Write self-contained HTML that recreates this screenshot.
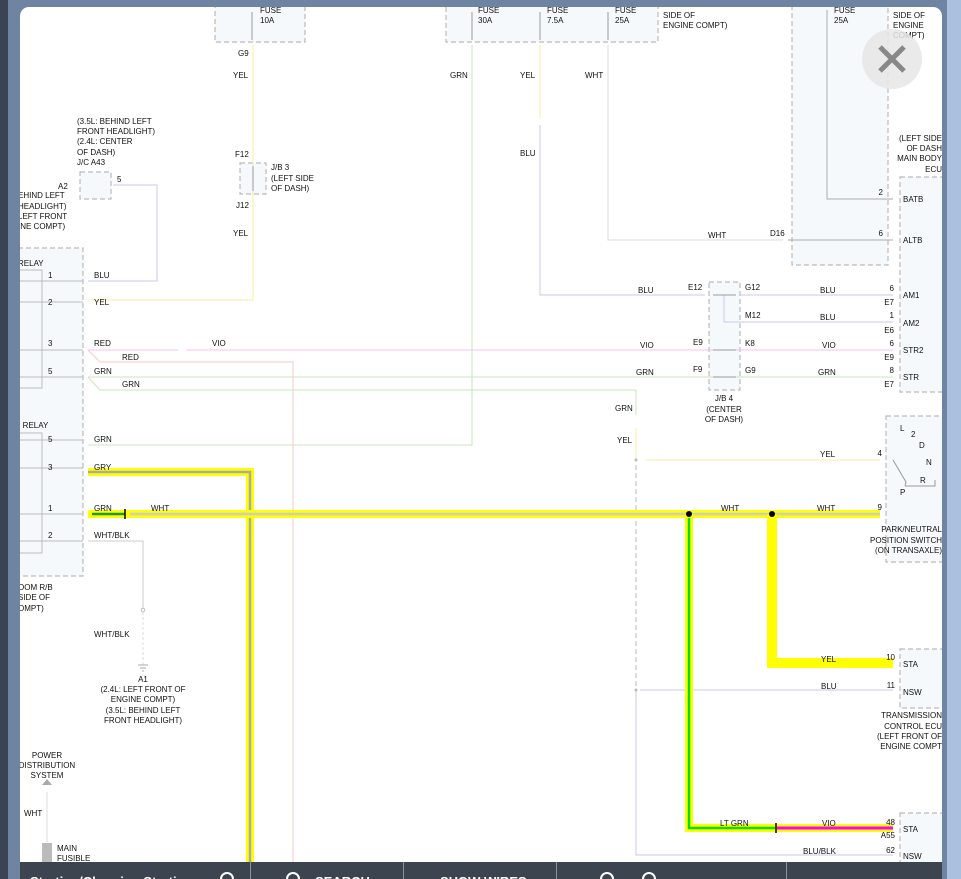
<!DOCTYPE html>
<html><head><meta charset="utf-8"><style>
html,body{margin:0;padding:0;width:961px;height:879px;overflow:hidden;background:#6e84a2;}
#panel{position:absolute;left:20px;top:7px;width:922px;height:872px;background:#fff;border-radius:9px 9px 0 0;overflow:hidden;}
#lstrip{position:absolute;left:0;top:0;width:8px;height:879px;background:#3a4454;}
#rstrip{position:absolute;left:947px;top:0;width:14px;height:879px;background:#a9c1df;}
svg{position:absolute;left:0;top:0;}
text{font-family:"Liberation Sans",sans-serif;font-size:8px;fill:#111;}
#tb{position:absolute;left:20px;top:862px;width:922px;height:17px;background:#3c4450;overflow:hidden;}
.tbt{position:absolute;top:12px;color:#fff;font:bold 13px "Liberation Sans",sans-serif;white-space:nowrap;}
.sep{position:absolute;top:0;width:1px;height:17px;background:#8a909a;}
.ic{position:absolute;top:10px;width:14px;height:14px;border:2px solid #fff;border-radius:50%;box-sizing:border-box;}
</style></head><body>
<div id="lstrip"></div><div id="rstrip"></div>
<div id="panel"></div>
<svg width="961" height="879" viewBox="0 0 961 879">
<defs><clipPath id="c"><rect x="20" y="7" width="922" height="855"/></clipPath></defs>
<g clip-path="url(#c)">
<g fill="#f6f9fc" stroke="#bbb" stroke-dasharray="5,3" stroke-width="1.2">
<rect x="215" y="0" width="90" height="42"/>
<rect x="446" y="0" width="212" height="42"/>
<rect x="792" y="0" width="96" height="265"/>
<rect x="900" y="177" width="50" height="215"/>
<rect x="709" y="282" width="31" height="108"/>
<rect x="240" y="163" width="26" height="31"/>
<rect x="80" y="172" width="31" height="27"/>
<rect x="10" y="248" width="73" height="328"/>
<rect x="886" y="416" width="60" height="146"/>
<rect x="900" y="649" width="50" height="59"/>
<rect x="900" y="813" width="50" height="60"/>
</g>
<g fill="none" stroke="#bbb" stroke-width="1">
<rect x="10" y="270" width="32" height="118"/>
<rect x="10" y="433" width="32" height="120"/>
</g>
<g fill="none" stroke-width="1">
<path d="M253 45V300H88" stroke="#f3f0a0"/>
<path d="M472 45V445H88" stroke="#c8e6c0"/>
<path d="M540 45V118" stroke="#f3f0a0"/>
<path d="M540 125V295H705" stroke="#c9c8f0"/>
<path d="M608 45V240H783" stroke="#ddd"/>
<path d="M740 295H893M724 295V322H745M745 322H893" stroke="#c9c8f0"/>
<path d="M113 185H157V281H88" stroke="#c9c8f0"/>
<path d="M88 350H178M186 350H893" stroke="#f4c0f0"/>
<path d="M88 350L100 362H293V862" stroke="#f7c8c8"/>
<path d="M88 377H893M88 377L100 390H636V415" stroke="#c8e6c0"/>
<path d="M636 428V460M645 460H880" stroke="#f3f0a0"/>
<path d="M636 465V690" stroke="#bbb" stroke-dasharray="5,3"/>
<path d="M640 690H893M636 690V855H893" stroke="#c9c8f0"/>
<path d="M88 541H143V608" stroke="#ccc"/>
<path d="M143 612V665" stroke="#ddd" stroke-dasharray="3,2"/>
<path d="M47 792V842" stroke="#ddd"/>
<path d="M827 10V199H893M788 240H893" stroke="#aaa"/>
<path d="M252 12V40M472 12V40M540 12V40M608 12V40M253 166V191M713 295H736M713 350H736M713 377H736" stroke="#999"/>
<path d="M20 281H83M20 302H83M20 350H83M20 377H83M20 440H83M20 468H83M20 514H83M20 541H83" stroke="#bbb"/>
<path d="M893 460L906 482L905 486M905 486H935V480" stroke="#999"/>
</g>
<g fill="none" stroke-linejoin="miter">
<path d="M88 472H250V862" stroke="#ffff00" stroke-width="8"/>
<path d="M88 472H250V862" stroke="#aaa" stroke-width="2.5"/>
<path d="M88 514H880" stroke="#ffff00" stroke-width="8"/>
<path d="M130 514H880" stroke="#ccc" stroke-width="2.5"/>
<path d="M92 514H125" stroke="#1a9a1a" stroke-width="2.5"/>
<path d="M689 514V828H893" stroke="#ffff00" stroke-width="8"/>
<path d="M689 518V828H775" stroke="#00e000" stroke-width="2.5"/>
<path d="M777 828H893" stroke="#ff00ff" stroke-width="3"/>
<path d="M772 514V663H893" stroke="#ffff00" stroke-width="10"/>
</g>
<circle cx="689" cy="514" r="3" fill="#000"/><circle cx="772" cy="514" r="3" fill="#000"/>
<path d="M125 509V519M776 823V833" stroke="#000" stroke-width="1.5"/>
<circle cx="636" cy="460" r="1.5" fill="#bbb"/><circle cx="143" cy="610" r="1.8" fill="none" stroke="#bbb"/>
<circle cx="636" cy="690" r="1.5" fill="#bbb"/>
<path d="M42 785L47 779L52 785Z" fill="#aaa"/>
<rect x="42" y="843" width="10" height="20" fill="#bbb"/>
<path d="M138 665H148M140 668H146M142 671H144" stroke="#aaa"/>
<text x="260" y="13">FUSE</text><text x="260" y="23">10A</text>
<text x="478" y="13">FUSE</text><text x="478" y="23">30A</text>
<text x="547" y="13">FUSE</text><text x="547" y="23">7.5A</text>
<text x="615" y="13">FUSE</text><text x="615" y="23">25A</text>
<text x="834" y="13">FUSE</text><text x="834" y="23">25A</text>
<text x="663" y="18">SIDE OF</text><text x="663" y="28">ENGINE COMPT)</text>
<text x="893" y="18">SIDE OF</text><text x="893" y="28">ENGINE</text><text x="893" y="38">COMPT)</text>
<text x="238" y="56">G9</text><text x="233" y="78">YEL</text>
<text x="450" y="78">GRN</text><text x="520" y="78">YEL</text><text x="585" y="78">WHT</text>
<text x="520" y="156">BLU</text>
<text x="235" y="157">F12</text><text x="236" y="208">J12</text><text x="233" y="236">YEL</text>
<text x="271" y="170">J/B 3</text><text x="271" y="181">(LEFT SIDE</text><text x="271" y="191">OF DASH)</text>
<text x="77" y="124">(3.5L: BEHIND LEFT</text><text x="77" y="134">FRONT HEADLIGHT)</text><text x="77" y="144">(2.4L: CENTER</text><text x="77" y="155">OF DASH)</text><text x="77" y="165">J/C A43</text>
<text x="58" y="189">A2</text><text x="117" y="182">5</text>
<text x="18" y="198">EHIND LEFT</text><text x="18" y="209">HEADLIGHT)</text><text x="18" y="219">LEFT FRONT</text><text x="18" y="229">INE COMPT)</text>
<text x="18" y="266">RELAY</text><text x="16" y="428">2 RELAY</text>
<text x="48" y="278">1</text><text x="48" y="305">2</text><text x="48" y="346">3</text><text x="48" y="374">5</text>
<text x="48" y="442">5</text><text x="48" y="470">3</text><text x="48" y="511">1</text><text x="48" y="538">2</text>
<text x="94" y="278">BLU</text><text x="94" y="305">YEL</text><text x="94" y="346">RED</text><text x="122" y="360">RED</text>
<text x="212" y="346">VIO</text><text x="94" y="374">GRN</text><text x="122" y="387">GRN</text>
<text x="94" y="442">GRN</text><text x="94" y="470">GRY</text><text x="94" y="511">GRN</text><text x="151" y="511">WHT</text>
<text x="94" y="538">WHT/BLK</text>
<text x="18" y="590">OOM R/B</text><text x="18" y="600">SIDE OF</text><text x="18" y="611">OMPT)</text>
<text x="94" y="637">WHT/BLK</text>
<g text-anchor="middle"><text x="143" y="682">A1</text><text x="143" y="692">(2.4L: LEFT FRONT OF</text><text x="143" y="702">ENGINE COMPT)</text><text x="143" y="713">(3.5L: BEHIND LEFT</text><text x="143" y="723">FRONT HEADLIGHT)</text>
<text x="47" y="758">POWER</text><text x="47" y="768">DISTRIBUTION</text><text x="47" y="778">SYSTEM</text>
<text x="724" y="401">J/B 4</text><text x="724" y="412">(CENTER</text><text x="724" y="422">OF DASH)</text></g>
<text x="24" y="816">WHT</text><text x="57" y="851">MAIN</text><text x="57" y="861">FUSIBLE</text>
<text x="708" y="238">WHT</text><text x="770" y="236">D16</text>
<g text-anchor="end"><text x="942" y="141">(LEFT SIDE</text><text x="942" y="151">OF DASH</text><text x="942" y="161">MAIN BODY</text><text x="942" y="172">ECU</text>
<text x="942" y="532">PARK/NEUTRAL</text><text x="942" y="543">POSITION SWITCH</text><text x="942" y="553">(ON TRANSAXLE)</text>
<text x="942" y="718">TRANSMISSION</text><text x="942" y="729">CONTROL ECU</text><text x="942" y="739">(LEFT FRONT OF</text><text x="942" y="749">ENGINE COMPT</text>
<text x="883" y="195">2</text><text x="883" y="236">6</text><text x="894" y="291">6</text><text x="894" y="305">E7</text>
<text x="894" y="318">1</text><text x="894" y="333">E6</text><text x="894" y="346">6</text><text x="894" y="360">E9</text>
<text x="894" y="373">8</text><text x="894" y="387">E7</text><text x="882" y="456">4</text><text x="882" y="510">9</text>
<text x="895" y="660">10</text><text x="895" y="688">11</text><text x="895" y="825">48</text><text x="895" y="838">A55</text><text x="895" y="853">62</text></g>
<text x="903" y="202">BATB</text><text x="903" y="243">ALTB</text><text x="903" y="298">AM1</text><text x="903" y="326">AM2</text><text x="903" y="353">STR2</text><text x="903" y="380">STR</text>
<text x="903" y="667">STA</text><text x="903" y="695">NSW</text><text x="903" y="832">STA</text><text x="903" y="859">NSW</text>
<text x="638" y="293">BLU</text><text x="688" y="290">E12</text><text x="745" y="290">G12</text><text x="820" y="293">BLU</text>
<text x="745" y="318">M12</text><text x="820" y="320">BLU</text>
<text x="640" y="348">VIO</text><text x="693" y="345">E9</text><text x="745" y="346">K8</text><text x="822" y="348">VIO</text>
<text x="636" y="375">GRN</text><text x="693" y="372">F9</text><text x="745" y="373">G9</text><text x="818" y="375">GRN</text>
<text x="615" y="411">GRN</text><text x="617" y="443">YEL</text><text x="820" y="457">YEL</text>
<text x="721" y="511">WHT</text><text x="817" y="511">WHT</text>
<text x="900" y="431">L</text><text x="911" y="437">2</text><text x="919" y="448">D</text><text x="926" y="465">N</text><text x="920" y="483">R</text><text x="900" y="495">P</text>
<text x="821" y="662">YEL</text><text x="821" y="689">BLU</text>
<text x="720" y="826">LT GRN</text><text x="822" y="826">VIO</text><text x="803" y="854">BLU/BLK</text>
</g>
<circle cx="892" cy="59" r="30" fill="#e6e6e6" fill-opacity="0.85"/>
<path d="M880 47L904 71M904 47L880 71" stroke="#888" stroke-width="5"/>
</svg>
<div id="tb">
<div class="tbt" style="left:10px">Starting/Charging Starting</div>
<div class="ic" style="left:200px"></div>
<div class="sep" style="left:230px"></div>
<div class="ic" style="left:266px"></div>
<div class="tbt" style="left:295px">SEARCH</div>
<div class="sep" style="left:383px"></div>
<div class="tbt" style="left:420px">SHOW WIRES</div>
<div class="sep" style="left:536px"></div>
<div class="ic" style="left:580px"></div>
<div class="ic" style="left:622px"></div>
<div class="sep" style="left:766px"></div>
</div>
</body></html>
